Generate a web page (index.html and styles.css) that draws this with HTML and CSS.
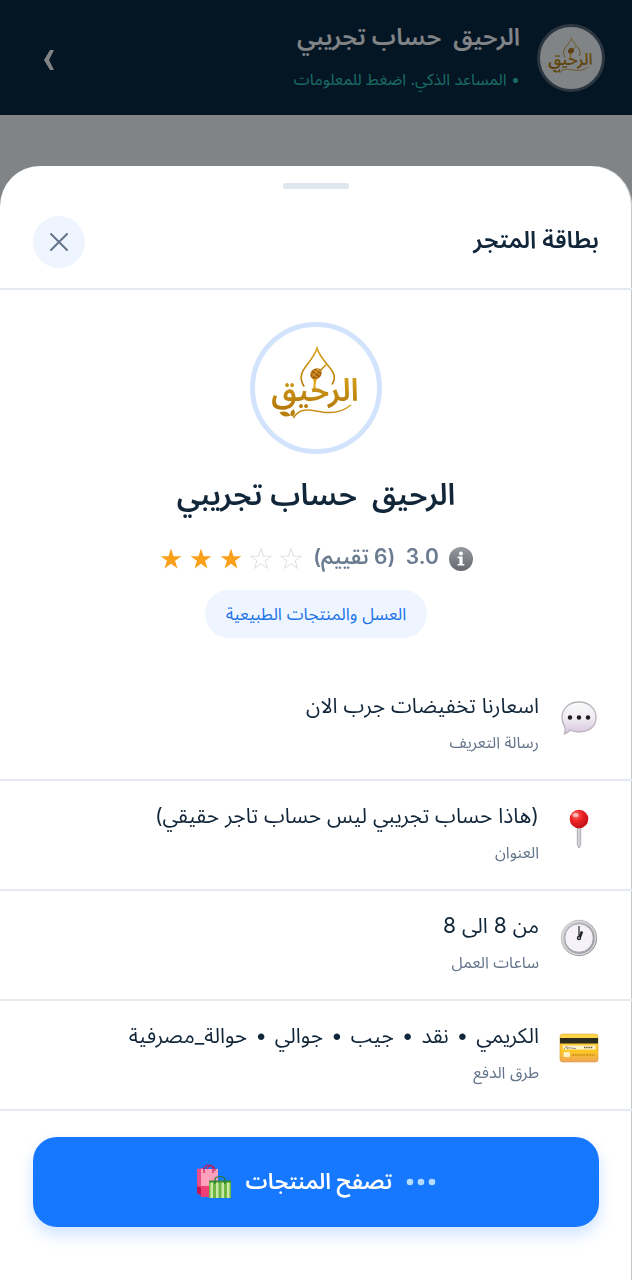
FILE: index.html
```html
<!DOCTYPE html>
<html lang="ar" dir="rtl">
<head>
<meta charset="utf-8">
<meta name="viewport" content="width=device-width, initial-scale=1">
<title>بطاقة المتجر</title>
<link rel="stylesheet" href="styles.css">
</head>
<body>
<svg class="defs" width="0" height="0" aria-hidden="true">
  <defs>
    <linearGradient id="gold" x1="0" y1="0" x2="0" y2="1"><stop offset="0" stop-color="#d9a520"/><stop offset="1" stop-color="#b47808"/></linearGradient>
    <symbol id="logo" viewBox="0 0 120 120">
      <g fill="none" stroke="url(#gold)" stroke-linecap="round">
        <path d="M48 58C39 43 56 37 61 21C66 37 84 43 76 56" stroke-width="1.6"/>
        <path d="M38 89C45 77 58 83 69 84S88 82 94 77" stroke-width="1.5"/>
        <path d="M61 46L70 37" stroke-width="1.6"/>
      </g>
      <ellipse cx="60" cy="46" rx="6" ry="5" transform="rotate(-40 60 46)" fill="#a8620c"/>
      <path d="M55 45L62 50M57 42L64 47M60 41L65 44M56 49L63 41" stroke="#e8b13c" stroke-width=".8"/>
      <path d="M57 51C58 54 58 58 57 61A2 2 0 0 0 60 61C59 57 60 54 61 51Z" fill="#e3a51c"/>
      <path d="M24 84Q31 81 35 87Q28 90 24 84ZM35 87Q34 83 38 81Q41 85 37 88Z" fill="#b9800d"/>
      <text x="59" y="73" text-anchor="middle" class="logo-word">الرحيق</text>
    </symbol>
    <symbol id="star" viewBox="0 0 24 24"><path d="M12 1.6L14.5 9.2H22.4L16.100 13.8L18.500 21.4L12 16.700L5.500 21.4L7.900 13.8L1.6 9.2H9.500Z"/></symbol>
  </defs>
</svg>

<header class="topbar">
  <span class="avatar"><svg viewBox="0 0 120 120" role="img" aria-label="شعار المتجر"><use href="#logo"/></svg></span>
  <div class="topbar-text">
    <h1 class="topbar-title">الرحيق&nbsp; حساب تجريبي</h1>
    <p class="topbar-status">• المساعد الذكي. اضغط للمعلومات</p>
  </div>
  <button class="back" aria-label="رجوع"><svg viewBox="0 0 12 22"><path d="M7 1H11L6 11L11 21H7L1 11Z"/></svg></button>
</header>

<div class="overlay">
  <section class="sheet" role="dialog" aria-labelledby="sheet-title">
    <div class="handle"></div>
    <div class="sheet-head">
      <h2 id="sheet-title" class="sheet-title">بطاقة المتجر</h2>
      <button class="close" aria-label="إغلاق"><svg viewBox="0 0 18 18"><path d="M1 1L17 17M17 1L1 17"/></svg></button>
    </div>

    <div class="profile">
      <span class="profile-logo"><svg viewBox="0 0 120 120" role="img" aria-label="الرحيق"><use href="#logo"/></svg></span>
      <h3 class="profile-name">الرحيق&nbsp; حساب تجريبي</h3>
      <div class="rating">
        <svg class="info" viewBox="0 0 24 24" aria-hidden="true">
          <defs><linearGradient id="infoBg" x1="0" y1="0" x2="0" y2="1"><stop offset="0" stop-color="#96999f"/><stop offset="1" stop-color="#656870"/></linearGradient></defs>
          <circle cx="12" cy="12" r="12" fill="url(#infoBg)"/>
          <circle cx="12" cy="6.4" r="2" fill="#fff"/>
          <path d="M8.6 9.6H13.6V17H15.4V18.6H8.6V17H10.4V11.2H8.6Z" fill="#fff"/>
        </svg>
        <span class="score">3.0&nbsp; (6 تقييم)</span>
        <span class="stars" role="img" aria-label="3 من 5">
          <svg class="star on"><use href="#star"/></svg>
          <svg class="star on"><use href="#star"/></svg>
          <svg class="star on"><use href="#star"/></svg>
          <svg class="star"><use href="#star"/></svg>
          <svg class="star"><use href="#star"/></svg>
        </span>
      </div>
      <span class="category">العسل والمنتجات الطبيعية</span>
    </div>

    <ul class="details">
      <li class="detail">
        <svg class="icon" viewBox="0 0 40 40" aria-hidden="true">
          <defs><linearGradient id="bubble" x1="0" y1="0" x2="0" y2="1"><stop offset="0" stop-color="#fafafa"/><stop offset=".5" stop-color="#f0ecf2"/><stop offset="1" stop-color="#d7c3e0"/></linearGradient></defs>
          <path d="M20 3C29.500 3 37 9 37 18.500S29.500 33 20 33C16.500 33 13.500 32.300 11 31C9.500 33 7.500 34.300 5.500 35C6.300 32.500 6.500 30 5.800 27.500C4 25 3 22 3 18.500C3 9 10.500 3 20 3Z" fill="url(#bubble)" stroke="#b9b3bd" stroke-width="1.300"/>
          <g fill="#1d1b1d"><circle cx="11" cy="18.500" r="2.200"/><circle cx="20" cy="18.500" r="2.200"/><circle cx="29" cy="18.500" r="2.200"/></g>
        </svg>
        <div class="detail-text"><p class="value">اسعارنا تخفيضات جرب الان</p><p class="label">رسالة التعريف</p></div>
      </li>
      <li class="detail">
        <svg class="icon" viewBox="0 0 40 40" aria-hidden="true">
          <defs><radialGradient id="pin" cx=".35" cy=".3" r=".75"><stop offset="0" stop-color="#ff7a78"/><stop offset=".4" stop-color="#ee2527"/><stop offset="1" stop-color="#bf0f18"/></radialGradient></defs>
          <path d="M18.300 17H21.700V36L20 39L18.300 36Z" fill="#d3d2d6" stroke="#9d9ca2" stroke-width=".8"/>
          <circle cx="20" cy="10" r="9.300" fill="url(#pin)"/>
          <ellipse cx="16.500" cy="6" rx="3" ry="2" fill="#fff" opacity=".55"/>
        </svg>
        <div class="detail-text"><p class="value">(هاذا حساب تجريبي ليس حساب تاجر حقيقي)</p><p class="label">العنوان</p></div>
      </li>
      <li class="detail">
        <svg class="icon" viewBox="0 0 40 40" aria-hidden="true">
          <defs><linearGradient id="rim" x1="0" y1="0" x2="1" y2="1"><stop offset="0" stop-color="#d4d4d6"/><stop offset="1" stop-color="#8f8f94"/></linearGradient></defs>
          <circle cx="20" cy="19" r="18.200" fill="url(#rim)"/>
          <circle cx="20" cy="19" r="16.500" fill="none" stroke="#dedee0" stroke-width="1.200"/>
          <circle cx="20" cy="19" r="14.300" fill="#f4f1f8" stroke="#a5a4aa" stroke-width="1"/>
          <path d="M20 19V7" stroke="#252528" stroke-width="1.200"/>
          <path d="M20.500 19L23 12.500" stroke="#252528" stroke-width="2.600"/>
          <circle cx="20" cy="19" r="1.600" fill="#aaa" stroke="#252528" stroke-width="1.200"/>
        </svg>
        <div class="detail-text"><p class="value">من 8 الى 8</p><p class="label">ساعات العمل</p></div>
      </li>
      <li class="detail">
        <svg class="icon" viewBox="0 0 40 40" aria-hidden="true">
          <defs><linearGradient id="card" x1="0" y1="0" x2="0" y2="1"><stop offset="0" stop-color="#ffd84a"/><stop offset=".65" stop-color="#fcc425"/><stop offset="1" stop-color="#f0a558"/></linearGradient></defs>
          <rect x="1" y="5" width="38" height="28" rx="2.500" fill="url(#card)" stroke="#d9a04a" stroke-width=".6"/>
          <path d="M1 9H39V14.500H1Z" fill="#2b2b1f"/>
          <path d="M4 16.500H36.500V20.500H4Z" fill="#fff3cb"/>
          <path d="M5 20C8 16.500 8.500 17 8 19.500C11 18 12 19.500 17 19.500" fill="none" stroke="#65655f" stroke-width=".7"/>
          <path d="M25 18.500H34" stroke="#6b5b35" stroke-width="1.400" stroke-dasharray="1.500 .7"/>
          <rect x="4.500" y="23" width="6.500" height="5" rx="1" fill="#fff2c4"/>
          <path d="M13 26H36" stroke="#d29a22" stroke-width="2" stroke-dasharray="2 .8"/>
        </svg>
        <div class="detail-text"><p class="value">الكريمي <span class="sep">•</span> نقد <span class="sep">•</span> جيب <span class="sep">•</span> جوالي <span class="sep">•</span> حوالة_مصرفية</p><p class="label">طرق الدفع</p></div>
      </li>
    </ul>

    <div class="actions">
      <button class="browse">
        <svg class="dots" viewBox="0 0 30 8" aria-hidden="true"><circle cx="4" cy="4" r="3.300"/><circle cx="15" cy="4" r="3.300"/><circle cx="26" cy="4" r="3.300"/></svg>
        <span>تصفح المنتجات</span>
        <svg class="bags" viewBox="0 0 36 36" aria-hidden="true">
          <path d="M1 5L7 4V33L1 29Z" fill="#e84f86"/><path d="M1 22L7 24V33L1 29Z" fill="#c51650"/>
          <path d="M5 5H22V33H5Z" fill="#ffa0bd"/><path d="M5 22H22V33H5Z" fill="#ef3d75"/>
          <path d="M8 9V4Q9 1 13 1Q17 1 17 5V9M11 5Q12 1 16 2Q19 3 19 7" fill="none" stroke="#c11c55" stroke-width="1.200"/>
          <path d="M13 17H35V34H13Z" fill="#6fb544"/>
          <path d="M14.500 18H17V34H14.500ZM20 18H22.500V34H20ZM25.500 18H28V34H25.500ZM31 18H33.500V34H31Z" fill="#c9e9a5"/>
          <path d="M13 16.500H35V18.500H13Z" fill="#3c8d2d"/>
          <path d="M19 20V15Q20 12.500 24 12.500Q29 12.500 29 16V20" fill="none" stroke="#277a35" stroke-width="1.200"/>
        </svg>
      </button>
    </div>
  </section>
</div>
</body>
</html>
```
FILE: styles.css
```css
* { box-sizing: border-box; }

body {
  margin: 0;
  min-height: 100vh;
  background: #fff;
  color: #12263a;
  font-family: Inter, "Noto Sans Arabic", "Noto Sans", "DejaVu Sans", sans-serif;
}

h1, h2, h3, p, ul { margin: 0; padding: 0; }
button { border: 0; padding: 0; font: inherit; cursor: pointer; }
svg { display: block; }
.defs { position: absolute; }

.topbar {
  display: flex;
  align-items: center;
  gap: 17px;
  height: 115px;
  padding: 0 27px;
  background: #042038;
  color: #fff;
}
.avatar {
  width: 68px;
  height: 68px;
  border: 3px solid #536273;
  border-radius: 50%;
  background: #fff;
}
.logo-word {
  fill: url(#gold);
  font-size: 31px;
  font-weight: 600;
}
.topbar-text { flex: 1; }
.topbar-title { font-size: 24px; line-height: 40px; font-weight: 600; }
.topbar-status { margin-top: 2px; font-size: 16px; line-height: 40px; color: #32cdb9; }
.back {
  width: 44px;
  height: 44px;
  margin-top: 4px;
  display: grid;
  place-items: center;
  background: none;
}
.back svg { width: 12px; height: 22px; fill: #fff; }

.overlay {
  position: fixed;
  inset: 0;
  display: flex;
  align-items: flex-end;
  background: rgba(4, 10, 16, 0.5);
}
.sheet {
  width: 100%;
  max-height: 100%;
  overflow: auto;
  padding-bottom: 53px;
  border-radius: 40px 40px 0 0;
  background: #fff;
  box-shadow: inset -1px 0 #c4c7ca;
}
.handle {
  width: 66px;
  height: 6px;
  margin: 17px auto 0;
  border-radius: 3px;
  background: #dfe6ee;
}
.sheet-head {
  display: flex;
  align-items: center;
  justify-content: space-between;
  padding: 27px 33px 20px;
  border-bottom: 2px solid #e4eaf0;
}
.sheet-title { padding-bottom: 4px; font-size: 24px; line-height: 40px; font-weight: 600; }
.close {
  display: grid;
  place-items: center;
  width: 52px;
  height: 52px;
  border-radius: 50%;
  background: #eff5ff;
}
.close svg { width: 18px; height: 18px; stroke: #64748b; stroke-width: 2; stroke-linecap: round; }

.profile {
  display: flex;
  flex-direction: column;
  align-items: center;
  padding: 32px 33px 33px;
}
.profile-logo {
  width: 132px;
  height: 132px;
  border: 5px solid #d2e4fd;
  border-radius: 50%;
}
.profile-name { margin-top: 14px; font-size: 30px; line-height: 52px; font-weight: 600; }
.rating { display: flex; align-items: center; gap: 10px; margin-top: 21px; height: 36px; }
.info { width: 24px; height: 24px; }
.score { align-self: flex-start; font-size: 21px; line-height: 32px; font-weight: 600; color: #6b7c90; }
.stars { display: flex; direction: ltr; gap: 6px; }
.star { width: 24px; height: 24px; fill: none; stroke: #dbe0e5; stroke-width: 1; }
.star.on { fill: #f9a11b; stroke: none; }
.category {
  margin-top: 13px;
  padding: 0 21px;
  border-radius: 24px;
  background: #eff5ff;
  color: #1d74e8;
  font-size: 17px;
  line-height: 48px;
}

.details { list-style: none; }
.detail {
  display: flex;
  align-items: flex-start;
  gap: 20px;
  padding: 18px 33px 20px;
  border-bottom: 2px solid #e4eaf0;
}
.icon { flex: none; width: 40px; height: 40px; margin-top: 10px; }
.detail-text { flex: 1; }
.value { font-size: 21px; line-height: 34px; }
.sep { margin: 0 2px; }
.label { margin-top: 3px; padding-bottom: 1px; font-size: 16px; line-height: 32px; color: #64748b; }

.actions { padding: 26px 33px 0; }
.browse {
  display: flex;
  align-items: center;
  justify-content: center;
  gap: 14px;
  width: 100%;
  height: 90px;
  border-radius: 24px;
  background: #1677ff;
  color: #fff;
  font-size: 22px;
  font-weight: 600;
  box-shadow: 0 8px 16px rgba(22, 119, 255, 0.2);
}
.dots { width: 30px; height: 8px; fill: #b3dcff; }
.bags { width: 36px; height: 36px; }
```
